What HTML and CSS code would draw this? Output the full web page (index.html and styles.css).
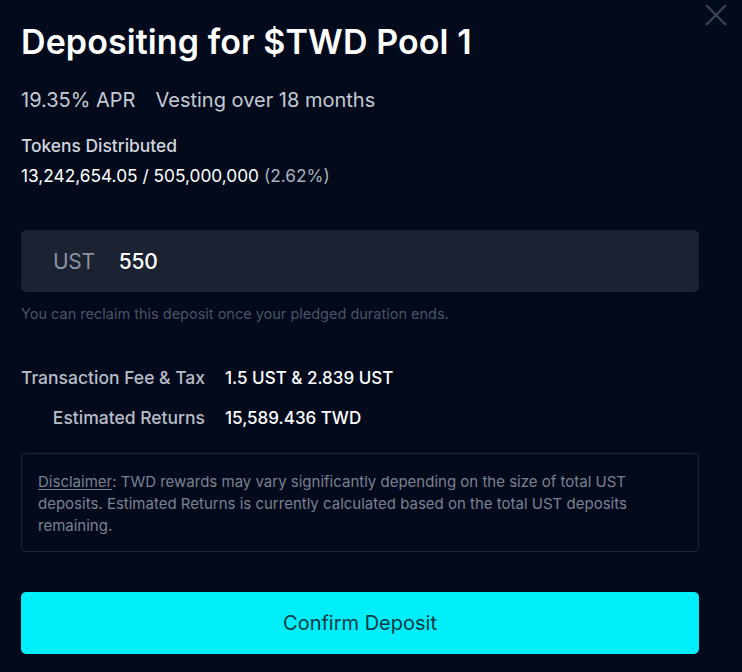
FILE: index.html
```html
<!DOCTYPE html>
<html>
<head>
<meta charset="utf-8">
<link rel="stylesheet" href="styles.css">
</head>
<body>
<div class="modal">
  <button class="close" aria-label="Close">
    <svg width="24" height="24" viewBox="0 0 24 24"><path d="M2 2 L22 22 M22 2 L2 22" stroke="#3a4356" stroke-width="2.4" fill="none"/></svg>
  </button>
  <h1 class="title">Depositing for $TWD Pool 1</h1>
  <div class="meta">
    <span>19.35% APR</span>
    <span>Vesting over 18 months</span>
  </div>
  <div class="dist-label">Tokens Distributed</div>
  <div class="dist-value">13,242,654.05 / 505,000,000 <span class="pct">(2.62%)</span></div>

  <div class="input">
    <span class="unit">UST</span>
    <span class="amount">550</span>
  </div>
  <p class="hint">You can reclaim this deposit once your pledged duration ends.</p>

  <div class="details">
    <span class="label">Transaction Fee &amp; Tax</span>
    <span class="value">1.5 UST &amp; 2.839 UST</span>
    <span class="label">Estimated Returns</span>
    <span class="value">15,589.436 TWD</span>
  </div>

  <div class="disclaimer">
    <span class="ul">Disclaimer</span>: TWD rewards may vary significantly depending on the size of total UST deposits. Estimated Returns is currently calculated based on the total UST deposits remaining.
  </div>

  <button class="confirm">Confirm Deposit</button>
</div>
</body>
</html>
```
FILE: styles.css
```css
html, body {
  margin: 0;
  padding: 0;
  background: #020a1c;
}
body {
  font-family: Inter, "Noto Sans", sans-serif;
  color: #ffffff;
  width: 742px;
  height: 672px;
  overflow: hidden;
}
.modal {
  position: relative;
  padding: 22px 43px 0 21px;
  display: flex;
  flex-direction: column;
}
.close {
  position: absolute;
  top: 3px;
  right: 14px;
  background: none;
  border: 0;
  padding: 0;
  width: 24px;
  height: 24px;
}
.title {
  margin: 0;
  font-size: 34px;
  line-height: 40px;
  font-weight: 600;
  letter-spacing: 0.1px;
  color: #ffffff;
}
.meta {
  margin-top: 26px;
  display: flex;
  gap: 20px;
  font-size: 20px;
  line-height: 24px;
  color: #c6cad3;
}
.dist-label {
  margin-top: 23px;
  font-size: 17.4px;
  line-height: 22px;
  font-weight: 500;
  color: #d2d5dc;
}
.dist-value {
  margin-top: 8px;
  font-size: 17.3px;
  line-height: 22px;
  color: #ffffff;
}
.pct { color: #a9aebb; }
.input {
  margin-top: 43px;
  height: 62px;
  background: #1b2232;
  border-radius: 5px;
  display: flex;
  align-items: center;
  padding-left: 32px;
  gap: 24px;
  font-size: 21px;
  letter-spacing: -0.3px;
}
.unit { color: #8d929f; }
.amount { color: #ffffff; font-weight: 500; }
.hint {
  margin: 12px 0 0;
  font-size: 14.5px;
  line-height: 20px;
  color: #4c5364;
}
.details {
  margin-top: 43px;
  display: grid;
  grid-template-columns: auto 1fr;
  column-gap: 20px;
  row-gap: 18px;
  font-size: 17px;
  line-height: 22px;
}
.label {
  text-align: right;
  color: #b9bdc7;
  font-weight: 500;
  font-size: 17.5px;
}
.value {
  color: #ffffff;
  font-weight: 500;
}
.disclaimer {
  margin-top: 24px;
  border: 1px solid #1f2637;
  border-radius: 5px;
  padding: 17px 50px 14px 16px;
  font-size: 15px;
  line-height: 22px;
  color: #7c8190;
}
.disclaimer .ul {
  text-decoration: underline;
  text-underline-offset: 2px;
}
.confirm {
  margin-top: 40px;
  height: 62px;
  border: 0;
  border-radius: 5px;
  background: #00eef9;
  color: #0b3a44;
  font-family: inherit;
  font-size: 20px;
}
```
